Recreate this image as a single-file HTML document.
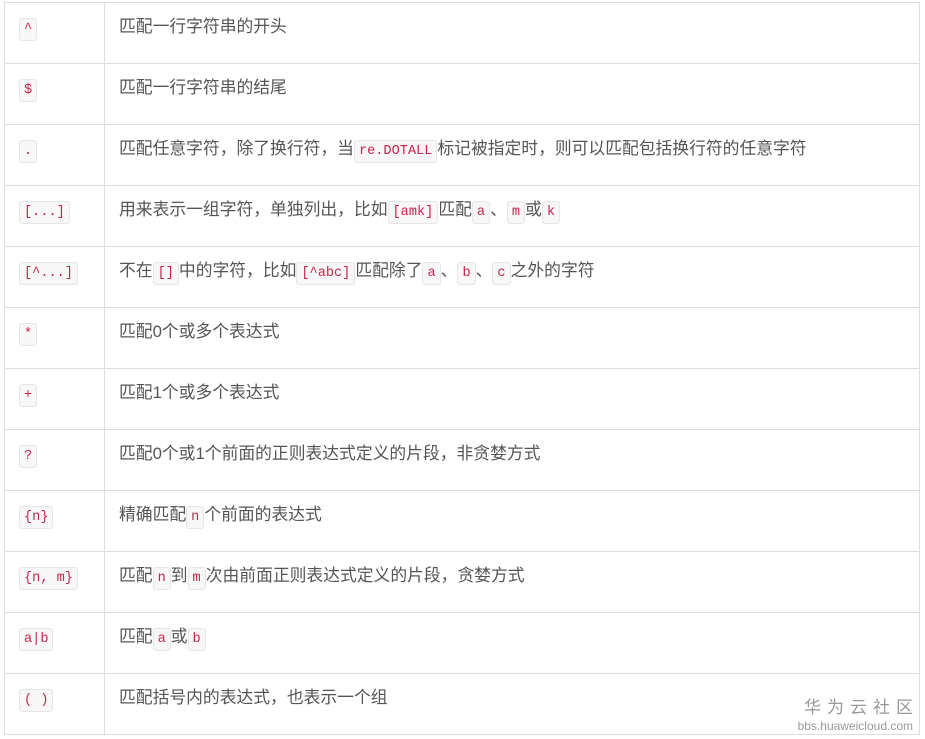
<!DOCTYPE html>
<html><head><meta charset="utf-8"><style>
body{margin:0;background:#fff;width:925px;height:739px;overflow:hidden;position:relative}
table{position:absolute;left:4px;top:2px;border-collapse:collapse;width:916px;font-family:"Liberation Sans","Noto Sans CJK SC",sans-serif;font-size:16.8px;color:#555}
td{border:1px solid #ddd;height:61px;padding:0 14px;vertical-align:top;box-sizing:border-box}
td div{padding-top:13px;line-height:22px;white-space:nowrap}
td:first-child{width:100px}
code{font-family:"Liberation Mono",monospace;font-size:13.6px;color:#c7254e;background:#f7f7f7;border:1px solid #e6e6e6;border-radius:3px;padding:3px 4px}
.wm{position:absolute;right:12px;top:698px;text-align:right;color:#999;font-family:"Liberation Sans","Noto Sans CJK SC",sans-serif}
.wm .a{font-size:17px;letter-spacing:6px;line-height:20px;margin-right:-6px}
.wm .b{font-size:12px;line-height:16px}
</style></head><body>
<table>
<tr><td><div><code>^</code></div></td><td><div>匹配一行字符串的开头</div></td></tr>
<tr><td><div><code>$</code></div></td><td><div>匹配一行字符串的结尾</div></td></tr>
<tr><td><div><code>.</code></div></td><td><div>匹配任意字符，除了换行符，当<code>re.DOTALL</code>标记被指定时，则可以匹配包括换行符的任意字符</div></td></tr>
<tr><td><div><code>[...]</code></div></td><td><div>用来表示一组字符，单独列出，比如<code>[amk]</code>匹配<code>a</code>、<code>m</code>或<code>k</code></div></td></tr>
<tr><td><div><code>[^...]</code></div></td><td><div>不在<code>[]</code>中的字符，比如<code>[^abc]</code>匹配除了<code>a</code>、<code>b</code>、<code>c</code>之外的字符</div></td></tr>
<tr><td><div><code>*</code></div></td><td><div>匹配0个或多个表达式</div></td></tr>
<tr><td><div><code>+</code></div></td><td><div>匹配1个或多个表达式</div></td></tr>
<tr><td><div><code>?</code></div></td><td><div>匹配0个或1个前面的正则表达式定义的片段，非贪婪方式</div></td></tr>
<tr><td><div><code>{n}</code></div></td><td><div>精确匹配<code>n</code>个前面的表达式</div></td></tr>
<tr><td><div><code>{n, m}</code></div></td><td><div>匹配<code>n</code>到<code>m</code>次由前面正则表达式定义的片段，贪婪方式</div></td></tr>
<tr><td><div><code>a|b</code></div></td><td><div>匹配<code>a</code>或<code>b</code></div></td></tr>
<tr><td><div><code>( )</code></div></td><td><div>匹配括号内的表达式，也表示一个组</div></td></tr>
</table>
<div class="wm"><div class="a">华为云社区</div><div class="b">bbs.huaweicloud.com</div></div>
</body></html>
